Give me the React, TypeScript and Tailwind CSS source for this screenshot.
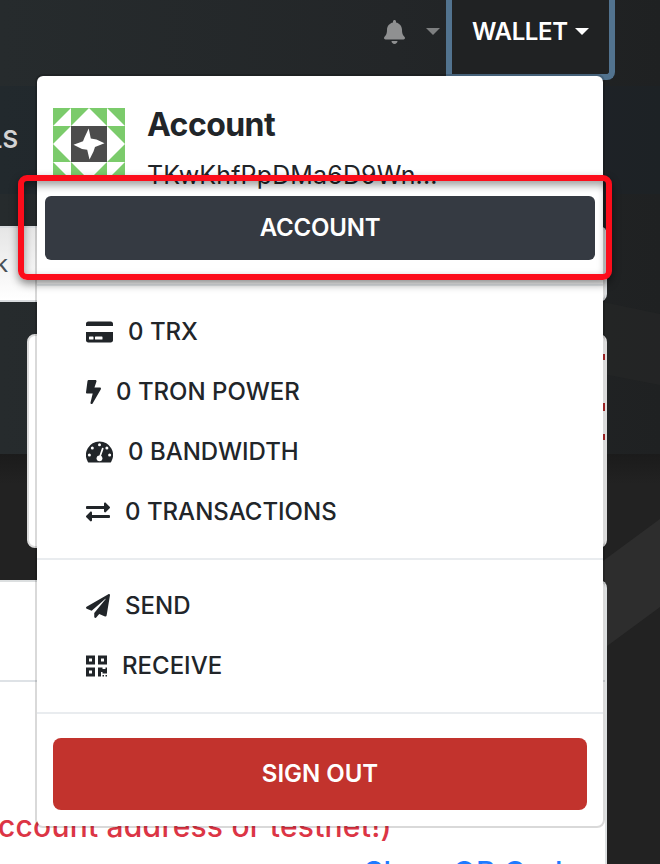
import React from "react";
import {
  FaBell,
  FaBolt,
  FaCreditCard,
  FaExchangeAlt,
  FaPaperPlane,
  FaQrcode,
} from "react-icons/fa";

function Caret({ className }: { className: string }) {
  return (
    <span
      className={`block h-0 w-0 border-x-[7px] border-t-[7px] border-x-transparent ${className}`}
    />
  );
}

function Backdrop() {
  return (
    <svg className="absolute inset-0" width="660" height="864" aria-hidden="true">
      <defs>
        <linearGradient id="hero" x1="0" x2="1">
          <stop offset="0" stopColor="#262b2d" />
          <stop offset="0.6" stopColor="#232628" />
          <stop offset="1" stopColor="#1f2122" />
        </linearGradient>
        <linearGradient id="edge" x1="0" x2="0" y1="0" y2="1">
          <stop offset="0" stopColor="#1b1b1b" />
          <stop offset="1" stopColor="#222222" />
        </linearGradient>
      </defs>
      <rect width="660" height="864" fill="#222222" />
      <rect width="660" height="454" fill="url(#hero)" />
      <rect y="86" width="660" height="108" fill="#1b2530" fillOpacity="0.3" />
      <path d="M603 302L660 314V385L603 374Z" fill="#252627" fillOpacity="0.7" />
      <rect y="454" width="660" height="30" fill="url(#edge)" />
      <path d="M603 561L660 519V607L603 649Z" fill="#2d2d2d" />
    </svg>
  );
}

function Identicon() {
  return (
    <svg width="72" height="72" viewBox="0 0 72 72" className="shrink-0">
      <rect width="72" height="72" fill="#7bcb6b" />
      <path
        d="M0 18L18 0V18ZM54 0L72 18H54ZM0 54H18V72ZM54 54H72L54 72ZM36 0L72 36L36 72L0 36Z"
        fill="#fff"
      />
      <rect x="18" y="18" width="36" height="36" fill="#4c4c4c" />
      <path
        d="M35.7 20.5L37.8 30.5L43.5 31.5L51.5 35.2L42 39L40.5 43.5L36.5 51.5L34.2 41.8L29 41L20.5 36.8L30 33.2L31.5 29.5Z"
        fill="#fff"
      />
    </svg>
  );
}

function Gauge() {
  return (
    <svg width="27" height="24" viewBox="0 0 27 24" className="shrink-0">
      <path
        d="M13.5 1.5A13.5 13.5 0 0 0 1.9 21.9Q2.3 22.5 3 22.5H24Q24.700 22.500 25.100 21.900A13.500 13.500 0 0 0 13.500 1.500Z"
        fill="#212529"
      />
      <g fill="#fff">
        <circle cx="3.4" cy="15" r="1.5" />
        <circle cx="6.3" cy="8" r="1.5" />
        <circle cx="13.5" cy="4.800" r="1.500" />
        <circle cx="20.900" cy="8" r="1.500" />
        <circle cx="23.600" cy="15" r="1.500" />
        <circle cx="13.500" cy="18.300" r="2.900" />
      </g>
      <path d="M13.800 17L16.700 8.600" stroke="#fff" strokeWidth="1.700" strokeLinecap="round" />
    </svg>
  );
}

function Row({ icon, children }: { icon: React.ReactNode; children: React.ReactNode }) {
  return (
    <div className="flex h-[60px] items-center gap-[15px] pl-[49px] text-2xl leading-9 font-medium text-[#212529]">
      {icon}
      <span>{children}</span>
    </div>
  );
}

function Divider() {
  return <div className="my-4 h-0.5 bg-[#e9ecef]" />;
}

function AccountMenu() {
  return (
    <div className="absolute top-[74px] left-[35px] h-[754px] w-[570px] rounded-lg border-2 border-black/15 bg-white bg-clip-padding">
      <div className="flex h-[120px] gap-[22px] pt-8 pl-4">
        <Identicon />
        <div className="text-[#212529]">
          <div className="-mt-0.5 text-[32px] leading-[38px] font-bold tracking-[-0.55px]">
            Account
          </div>
          <div className="mt-[13px] text-[25px] leading-9 tracking-[0.15px]">
            TKwKhfPpDMa6D9Wn...
          </div>
        </div>
      </div>
      <div className="mx-2 flex h-16 items-center justify-center rounded-md bg-[#353a42] text-2xl font-semibold tracking-[-0.2px] text-white">
        <span>ACCOUNT</span>
      </div>
      <div className="mt-6 mb-4 h-0.5 bg-[#e9ecef]" />
      <Row icon={<FaCreditCard className="h-6 w-[27px]" />}>0 TRX</Row>
      <Row icon={<FaBolt className="h-6 w-[15px]" />}>0 TRON POWER</Row>
      <Row icon={<Gauge />}>0 BANDWIDTH</Row>
      <Row icon={<FaExchangeAlt className="h-6 w-6" />}>0 TRANSACTIONS</Row>
      <Divider />
      <Row icon={<FaPaperPlane className="h-6 w-6" />}>SEND</Row>
      <Row icon={<FaQrcode className="h-6 w-[21px]" />}>RECEIVE</Row>
      <Divider />
      <div className="mx-4 mt-6 flex h-[72px] items-center justify-center rounded-lg bg-[#c2332d] text-2xl font-semibold text-white">
        <span>SIGN OUT</span>
      </div>
    </div>
  );
}

export default function App() {
  return (
    <div className="relative h-[864px] w-[660px] overflow-hidden font-['Inter',sans-serif]">
      <Backdrop />
      <div className="relative flex h-full flex-col">
        <nav className="flex h-20 shrink-0 items-start justify-end pr-[45px]">
          <FaBell className="mt-5 mr-[21px] h-6 w-[21px] text-[#8f9091]" />
          <Caret className="mt-7 mr-1.5 border-t-[#7d7f80]" />
          <div className="flex h-20 w-[169px] items-start rounded-br-lg border-x-[6px] border-b-[6px] border-[#52738f] bg-[#202223] pl-5">
            <span className="mt-3.5 w-[97px] text-2xl leading-9 font-semibold tracking-[-0.35px] text-white">
              WALLET
            </span>
            <Caret className="mt-7 ml-1.5 border-t-white" />
          </div>
        </nav>
        <div className="mt-[42px] flex h-9 w-[18px] shrink-0 justify-end text-2xl leading-9 font-semibold text-[#d3d3d4]">
          LS
        </div>
        <div className="mt-[68px] flex h-[76px] w-[607px] shrink-0 items-center rounded-r-lg border-y-2 border-r-2 border-[#d9dcdf] bg-linear-to-b from-[#e6e6e6] to-white text-2xl text-[#495057]">
          <span className="-ml-[5px]">k</span>
        </div>
        <div className="mt-8 ml-[27px] flex h-[214px] w-[580px] shrink-0 flex-col items-end rounded-lg border-2 border-[#dcdcdc] bg-white pt-[18px]">
          <span className="h-1.5 w-1 bg-[#b5292b]" />
          <span className="mt-[43px] h-2 w-1 bg-[#b5292b]" />
          <span className="mt-[23px] h-1.5 w-1 bg-[#b5292b]" />
        </div>
        <div className="mt-8 h-[284px] w-[607px] shrink-0 overflow-hidden rounded-tr-lg border-t-2 border-r-2 border-[#dcdfe0] bg-white">
          <div className="h-[100px] border-b-2 border-[#dee2e6]" />
          <div className="mt-[124px] -ml-0.5 text-[30px] leading-[40px] font-medium tracking-[0.22px] whitespace-nowrap text-[#dc3545]">
            ccount address or testnet!)
          </div>
          <div className="mt-[7px] ml-[364px] text-[30px] leading-[38px] font-medium tracking-[0.15px] whitespace-nowrap text-[#1f7bff]">
            Show QR Code
          </div>
        </div>
      </div>
      <AccountMenu />
      <div className="absolute top-[175px] left-[18px] h-[105px] w-[594px] rounded-[9px] border-[6px] border-[#fc0d1b] shadow-[0_4px_8px_rgba(0,0,0,0.45),inset_0_4px_8px_rgba(0,0,0,0.4)]" />
    </div>
  );
}
